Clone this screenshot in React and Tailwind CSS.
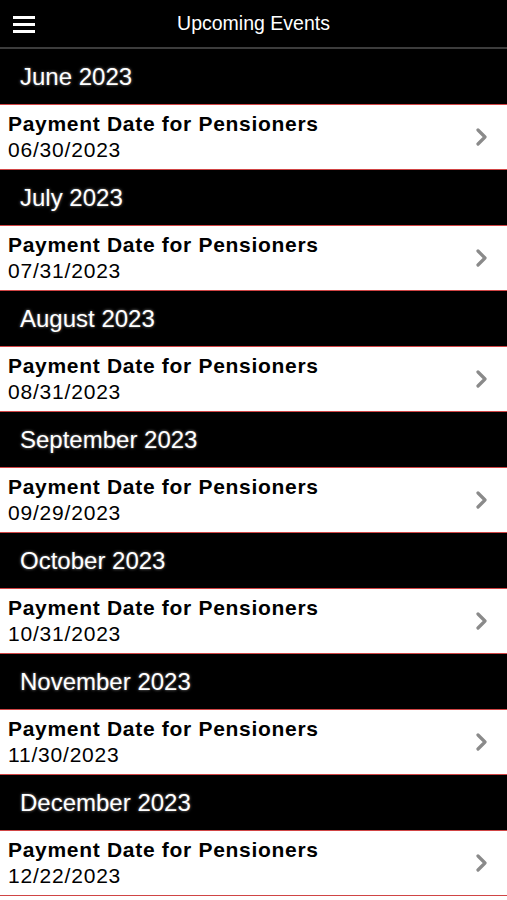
import React from "react";

const events = [
  ["June 2023", "06/30/2023"],
  ["July 2023", "07/31/2023"],
  ["August 2023", "08/31/2023"],
  ["September 2023", "09/29/2023"],
  ["October 2023", "10/31/2023"],
  ["November 2023", "11/30/2023"],
  ["December 2023", "12/22/2023"],
];

export default function App() {
  return (
    <div className="w-[507px] min-h-[900px] bg-white font-['Liberation_Sans',Arial,sans-serif]">
      <div className="relative h-[49px] bg-black border-b-2 border-[#3c3c3c] flex items-center justify-center">
        <div className="absolute left-[13px] top-[16px] flex flex-col gap-[4px]">
          <div className="w-[22px] h-[3px] bg-white" />
          <div className="w-[22px] h-[3px] bg-white" />
          <div className="w-[22px] h-[3px] bg-white" />
        </div>
        <span className="text-white text-[19.5px] leading-none">Upcoming Events</span>
      </div>
      {events.map(([month, date]) => (
        <div key={month}>
          <div className="h-[56px] bg-black border-b border-[#d04545] flex items-center pl-[20px]">
            <span className="text-white text-[24px] leading-none [text-shadow:0_0_3px_rgba(255,255,255,0.55)]">
              {month}
            </span>
          </div>
          <div className="h-[65px] bg-white border-b border-[#d04545] flex items-center justify-between pl-[8px] pr-[18px]">
            <div className="flex flex-col text-black">
              <span className="font-bold text-[21px] leading-[26px] tracking-[0.7px]">Payment Date for Pensioners</span>
              <span className="text-[21px] leading-[26px] tracking-[0.8px]">{date}</span>
            </div>
            <svg width="14" height="18" viewBox="0 0 14 18">
              <polyline points="3,2 10,9 3,16" fill="none" stroke="#8a8a8a" strokeWidth="3.2" strokeLinecap="round" strokeLinejoin="round" />
            </svg>
          </div>
        </div>
      ))}
    </div>
  );
}
